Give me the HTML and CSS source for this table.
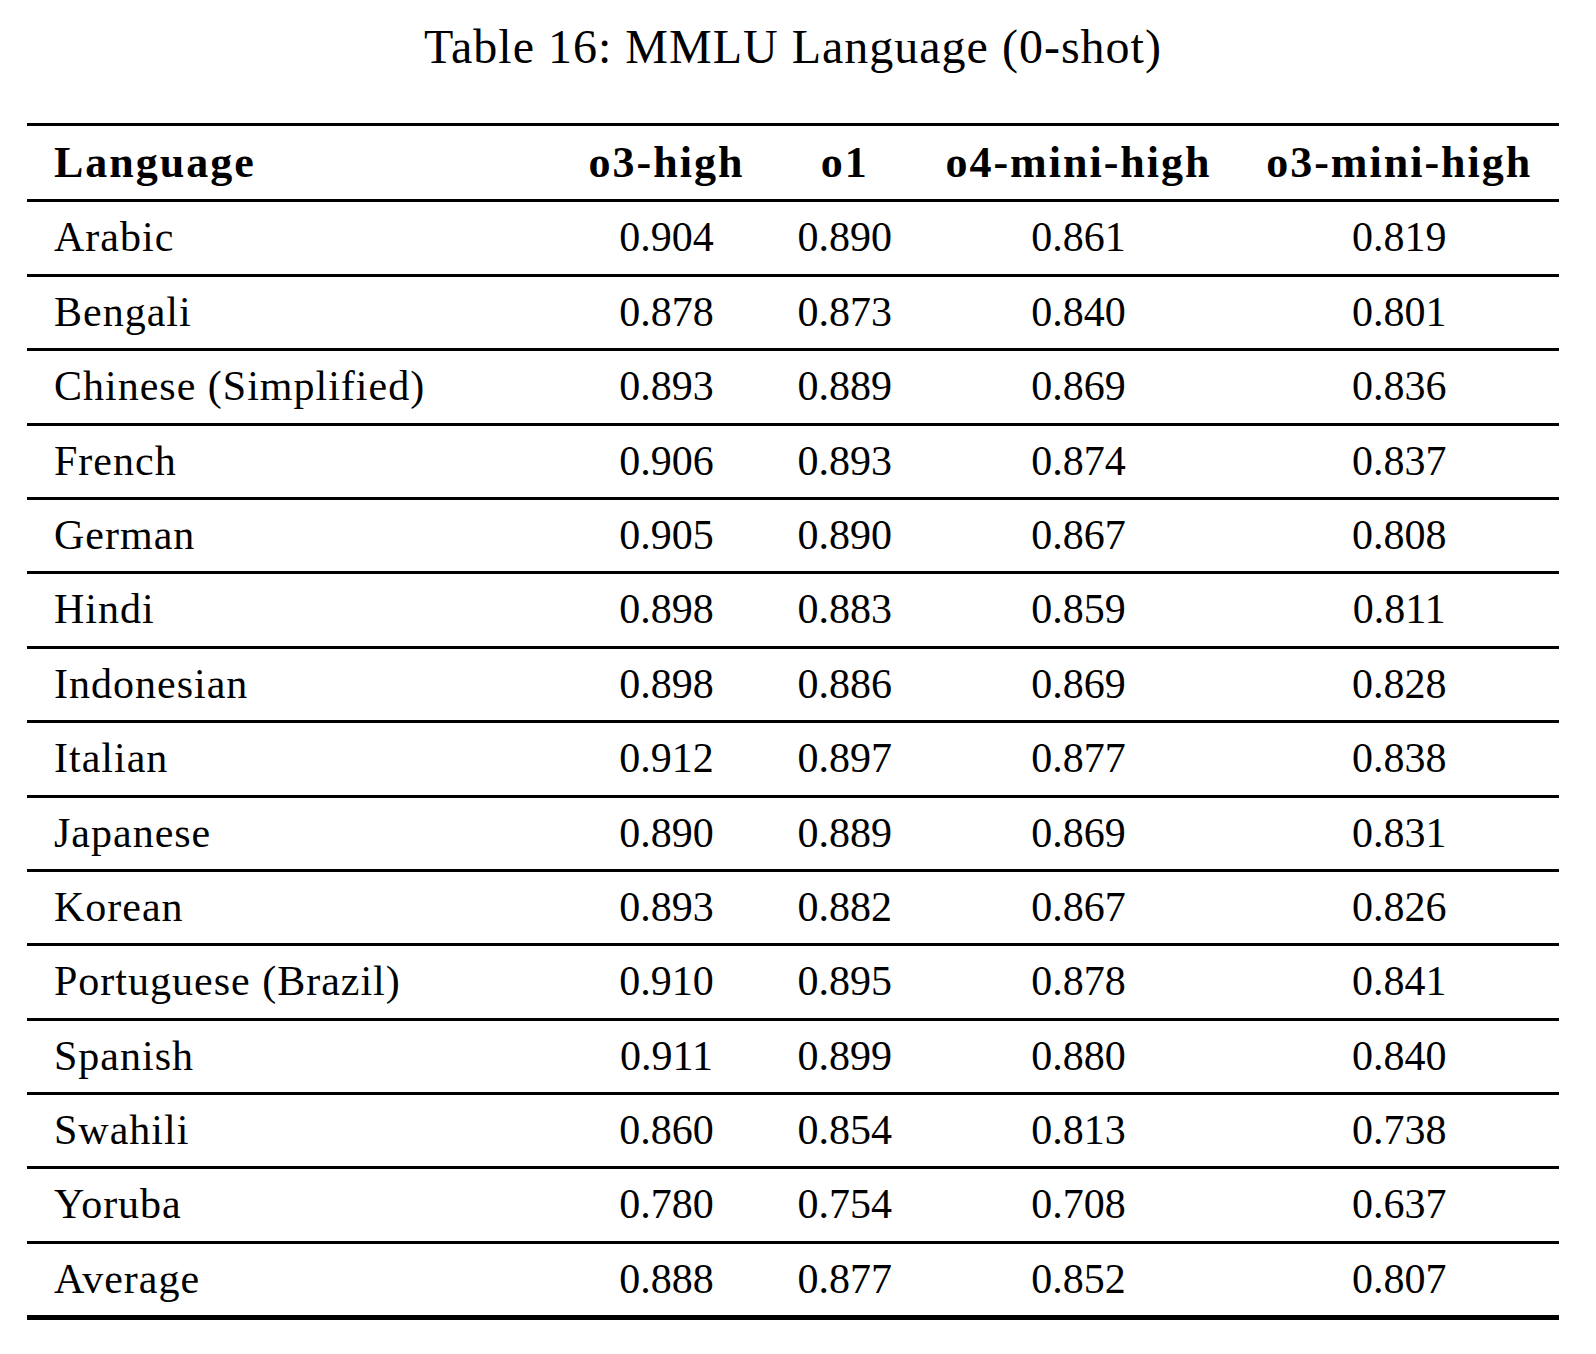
FILE: index.html
```html
<!DOCTYPE html>
<html lang="en">
<head>
<meta charset="utf-8">
<title>Table 16: MMLU Language (0-shot)</title>
<link rel="stylesheet" href="styles.css">
</head>
<body>
<div class="page">
  <div class="caption">Table 16: MMLU Language (0-shot)</div>
  <div class="table">
    <div class="row head">
      <div class="cell lang">Language</div>
      <div class="cell num">o3-high</div>
      <div class="cell num">o1</div>
      <div class="cell num">o4-mini-high</div>
      <div class="cell num">o3-mini-high</div>
    </div>
    <div class="row"><div class="cell lang">Arabic</div><div class="cell num">0.904</div><div class="cell num">0.890</div><div class="cell num">0.861</div><div class="cell num">0.819</div></div>
    <div class="row"><div class="cell lang">Bengali</div><div class="cell num">0.878</div><div class="cell num">0.873</div><div class="cell num">0.840</div><div class="cell num">0.801</div></div>
    <div class="row"><div class="cell lang">Chinese (Simplified)</div><div class="cell num">0.893</div><div class="cell num">0.889</div><div class="cell num">0.869</div><div class="cell num">0.836</div></div>
    <div class="row"><div class="cell lang">French</div><div class="cell num">0.906</div><div class="cell num">0.893</div><div class="cell num">0.874</div><div class="cell num">0.837</div></div>
    <div class="row"><div class="cell lang">German</div><div class="cell num">0.905</div><div class="cell num">0.890</div><div class="cell num">0.867</div><div class="cell num">0.808</div></div>
    <div class="row"><div class="cell lang">Hindi</div><div class="cell num">0.898</div><div class="cell num">0.883</div><div class="cell num">0.859</div><div class="cell num">0.811</div></div>
    <div class="row"><div class="cell lang">Indonesian</div><div class="cell num">0.898</div><div class="cell num">0.886</div><div class="cell num">0.869</div><div class="cell num">0.828</div></div>
    <div class="row"><div class="cell lang">Italian</div><div class="cell num">0.912</div><div class="cell num">0.897</div><div class="cell num">0.877</div><div class="cell num">0.838</div></div>
    <div class="row"><div class="cell lang">Japanese</div><div class="cell num">0.890</div><div class="cell num">0.889</div><div class="cell num">0.869</div><div class="cell num">0.831</div></div>
    <div class="row"><div class="cell lang">Korean</div><div class="cell num">0.893</div><div class="cell num">0.882</div><div class="cell num">0.867</div><div class="cell num">0.826</div></div>
    <div class="row"><div class="cell lang">Portuguese (Brazil)</div><div class="cell num">0.910</div><div class="cell num">0.895</div><div class="cell num">0.878</div><div class="cell num">0.841</div></div>
    <div class="row"><div class="cell lang">Spanish</div><div class="cell num">0.911</div><div class="cell num">0.899</div><div class="cell num">0.880</div><div class="cell num">0.840</div></div>
    <div class="row"><div class="cell lang">Swahili</div><div class="cell num">0.860</div><div class="cell num">0.854</div><div class="cell num">0.813</div><div class="cell num">0.738</div></div>
    <div class="row"><div class="cell lang">Yoruba</div><div class="cell num">0.780</div><div class="cell num">0.754</div><div class="cell num">0.708</div><div class="cell num">0.637</div></div>
    <div class="row last"><div class="cell lang">Average</div><div class="cell num">0.888</div><div class="cell num">0.877</div><div class="cell num">0.852</div><div class="cell num">0.807</div></div>
  </div>
</div>
</body>
</html>
```
FILE: styles.css
```css
html, body {
  margin: 0;
  padding: 0;
  background: #ffffff;
}

body {
  font-family: "Liberation Serif", "Times New Roman", serif;
  color: #000000;
}

.page {
  padding: 21px 37px 0 27px;
  width: 1532px;
}

.caption {
  font-size: 48px;
  line-height: 52px;
  letter-spacing: 1px;
  text-align: center;
  white-space: nowrap;
}

.table {
  margin-top: 50px;
  border-top: 3.5px solid #000;
  display: flex;
  flex-direction: column;
}

.row {
  display: grid;
  grid-template-columns: 534px 211px 145.5px 322px 319.5px;
  height: 71.4px;
  line-height: 71.4px;
  border-bottom: 3px solid #000;
  font-size: 42px;
  white-space: nowrap;
}

.row.head {
  font-weight: bold;
  font-size: 44px;
  letter-spacing: 2px;
  height: 73.4px;
  line-height: 73.4px;
}

.row.last {
  border-bottom-width: 5px;
}

.cell.lang {
  padding-left: 27px;
  text-align: left;
  letter-spacing: 1px;
}

.row.head .cell.lang {
  letter-spacing: 2px;
}

.cell.num {
  text-align: center;
}
```
